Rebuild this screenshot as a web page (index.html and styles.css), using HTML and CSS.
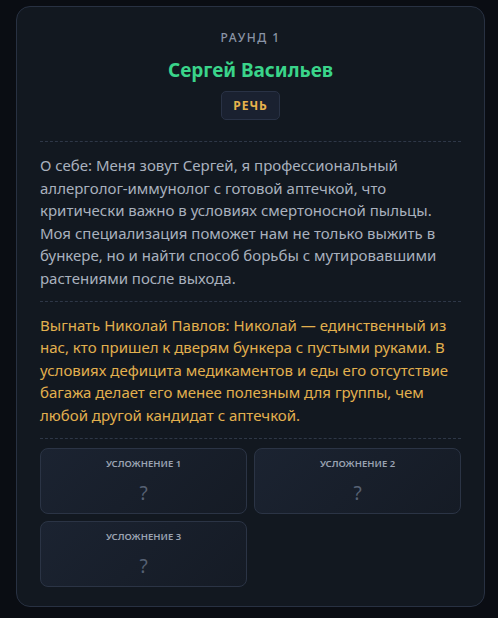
FILE: index.html
```html
<!DOCTYPE html>
<html lang="ru">
<head>
<meta charset="utf-8">
<link rel="stylesheet" href="styles.css">
</head>
<body>
<div class="card">
  <div class="head">
    <div class="round">РАУНД 1</div>
    <div class="name">Сергей Васильев</div>
    <div class="badge">РЕЧЬ</div>
  </div>
  <p class="about">О себе: Меня зовут Сергей, я профессиональный аллерголог-иммунолог с готовой аптечкой, что критически важно в условиях смертоносной пыльцы. Моя специализация поможет нам не только выжить в бункере, но и найти способ борьбы с мутировавшими растениями после выхода.</p>
  <p class="kick">Выгнать Николай Павлов: Николай — единственный из нас, кто пришел к дверям бункера с пустыми руками. В условиях дефицита медикаментов и еды его отсутствие багажа делает его менее полезным для группы, чем любой другой кандидат с аптечкой.</p>
  <div class="grid">
    <div class="cell"><div class="label">УСЛОЖНЕНИЕ 1</div><div class="q">?</div></div>
    <div class="cell"><div class="label">УСЛОЖНЕНИЕ 2</div><div class="q">?</div></div>
    <div class="cell"><div class="label">УСЛОЖНЕНИЕ 3</div><div class="q">?</div></div>
  </div>
</div>
</body>
</html>
```
FILE: styles.css
```css
html, body {
  margin: 0;
  padding: 0;
  background: #0a0d13;
}
body {
  padding: 6px 12px 0 16px;
  font-family: "Noto Sans", "Open Sans", sans-serif;
}
.card {
  width: 469px;
  box-sizing: border-box;
  background: #121820;
  border: 1px solid #283142;
  border-radius: 14px;
  padding: 22px 23px 19px 23px;
}
.head {
  display: flex;
  flex-direction: column;
  align-items: center;
  padding-bottom: 21px;
  border-bottom: 1px dashed #2e3747;
}
.round {
  font-size: 12px;
  letter-spacing: 1.5px;
  color: #8a94a6;
  line-height: 17px;
  font-weight: 500;
}
.name {
  margin-top: 10px;
  font-size: 19px;
  font-weight: 700;
  color: #3ad48a;
  line-height: 28px;
}
.badge {
  margin-top: 7px;
  box-sizing: border-box;
  height: 29px;
  padding: 0 11px;
  display: flex;
  align-items: center;
  border: 1px solid #293245;
  background: #1a2130;
  border-radius: 5px;
  color: #e7b24c;
  font-size: 12px;
  font-weight: 700;
  letter-spacing: 1px;
}
.about, .kick {
  margin: 0;
  font-size: 15px;
  line-height: 22.6px;
  padding: 12px 0 11px;
  border-bottom: 1px dashed #2e3747;
}
.about {
  color: #a9b1be;
}
.kick {
  color: #e2b04e;
}
.grid {
  margin-top: 9px;
  display: grid;
  grid-template-columns: 1fr 1fr;
  gap: 7px;
}
.cell {
  height: 66px;
  box-sizing: border-box;
  border: 1px solid #2b3445;
  border-radius: 8px;
  background: linear-gradient(135deg, #1b2331, #151b25);
  display: flex;
  flex-direction: column;
  align-items: center;
  padding-top: 8px;
}
.label {
  font-size: 9.5px;
  font-weight: 600;
  color: #9aa3b2;
  line-height: 14px;
}
.q {
  margin-top: 10px;
  font-size: 19px;
  color: #566173;
  line-height: 24px;
}
```
